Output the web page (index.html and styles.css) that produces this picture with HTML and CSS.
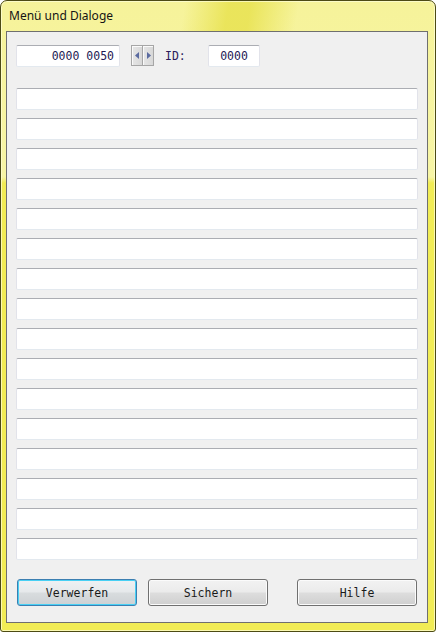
FILE: index.html
```html
<!DOCTYPE html>
<html lang="de">
<head>
<meta charset="utf-8">
<title>Menü und Dialoge</title>
<link rel="stylesheet" href="styles.css">
</head>
<body>
<div class="window">
  <div class="titlebar"><span class="title">Menü und Dialoge</span></div>
  <div class="client">
    <div class="toprow">
      <div class="field num">0000 0050</div>
      <div class="spin">
        <span class="spinbtn"><svg width="5" height="7" viewBox="0 0 5 7"><path d="M4 0 L0 3.5 L4 7 Z" fill="#5a6aa0"/></svg></span>
        <span class="spinbtn"><svg width="5" height="7" viewBox="0 0 5 7"><path d="M1 0 L5 3.5 L1 7 Z" fill="#5a6aa0"/></svg></span>
      </div>
      <span class="idlabel">ID:</span>
      <div class="field idfield">0000</div>
    </div>
    <div class="list">
      <div class="field line"></div>
      <div class="field line"></div>
      <div class="field line"></div>
      <div class="field line"></div>
      <div class="field line"></div>
      <div class="field line"></div>
      <div class="field line"></div>
      <div class="field line"></div>
      <div class="field line"></div>
      <div class="field line"></div>
      <div class="field line"></div>
      <div class="field line"></div>
      <div class="field line"></div>
      <div class="field line"></div>
      <div class="field line"></div>
      <div class="field line"></div>
    </div>
    <div class="buttons">
      <button class="btn default">Verwerfen</button>
      <button class="btn">Sichern</button>
      <button class="btn right">Hilfe</button>
    </div>
  </div>
</div>
</body>
</html>
```
FILE: styles.css
```css
html, body {
  margin: 0;
  padding: 0;
  background: #ffffff;
}
body {
  width: 436px;
  height: 632px;
  overflow: hidden;
}
.window {
  box-sizing: border-box;
  width: 436px;
  height: 632px;
  border: 1px solid #4d4b14;
  border-radius: 7px 7px 3px 3px;
  padding: 0 7px 8px 5px;
  display: flex;
  flex-direction: column;
  background:
    linear-gradient(100deg, rgba(255,255,255,0) 0%, rgba(255,255,255,0) 42%, rgba(232,226,80,0.85) 52%, rgba(232,226,80,0.85) 57%, rgba(255,255,255,0) 68%) 0 0 / 100% 30px no-repeat,
    linear-gradient(to bottom, #f6f39a 0px, #f7f5a6 176px, #f1ec55 182px, #f1ec55 100%);
  box-shadow: inset 0 0 0 1px rgba(255,255,220,0.7);
}
.titlebar {
  height: 30px;
  flex: none;
  display: flex;
  align-items: flex-start;
}
.title {
  font-family: "Noto Sans", "Open Sans", sans-serif;
  font-size: 12px;
  color: #141414;
  padding: 7px 0 0 3px;
  line-height: 16px;
}
.client {
  flex: 1;
  background: #f0f0f0;
  border: 1px solid #6f6f6f;
  padding: 13px 9px 15px 9px;
  display: flex;
  flex-direction: column;
}
.field {
  box-sizing: border-box;
  height: 22px;
  background: #ffffff;
  border: 1px solid #e2e3ea;
  border-top-color: #abadb3;
  border-bottom-color: #e3e9ef;
  border-radius: 2px;
  font-family: "DejaVu Sans Mono", "Liberation Mono", monospace;
  font-size: 11.5px;
  color: #1d1a55;
  line-height: 20px;
}
.toprow {
  display: flex;
  align-items: center;
  height: 22px;
}
.num {
  width: 104px;
  text-align: right;
  padding-right: 5px;
}
.spin {
  display: flex;
  margin-left: 11px;
  height: 21px;
  align-self: flex-start;
}
.spinbtn {
  box-sizing: border-box;
  width: 12px;
  height: 21px;
  border: 1px solid #a6a6a6;
  background: linear-gradient(to right, #e6e6e6, #d8d8d8);
  display: flex;
  align-items: center;
  justify-content: center;
  box-shadow: inset 1px 1px 0 #fafafa;
}
.spinbtn + .spinbtn {
  border-left: none;
  width: 11px;
}
.idlabel {
  margin-left: 11px;
  font-family: "DejaVu Sans Mono", "Liberation Mono", monospace;
  font-size: 11.5px;
  color: #2a1a5a;
  width: 43px;
}
.idfield {
  width: 52px;
  text-align: center;
}
.list {
  margin-top: 21px;
  display: flex;
  flex-direction: column;
  gap: 8px;
}
.line {
  width: 402px;
}
.buttons {
  margin-top: 19px;
  display: flex;
  padding: 0 1px 0 1px;
  gap: 11px;
}
.btn {
  box-sizing: border-box;
  width: 120px;
  height: 27px;
  border: 1px solid #707070;
  border-radius: 3px;
  background: linear-gradient(to bottom, #f2f2f2 0%, #ebebeb 48%, #dddddd 52%, #cfcfcf 100%);
  box-shadow: inset 0 0 0 1px #fbfbfb;
  font-family: "DejaVu Sans Mono", "Liberation Mono", monospace;
  font-size: 11.5px;
  color: #1a1a1a;
  padding: 0;
  margin: 0;
}
.btn.default {
  border-color: #3c7fb1;
  box-shadow: inset 0 0 0 1px #48d0f4;
  background: linear-gradient(to bottom, #eef1f3 0%, #e6e9eb 48%, #d8dcde 52%, #cdd1d4 100%);
}
.btn.right {
  margin-left: auto;
}
```
